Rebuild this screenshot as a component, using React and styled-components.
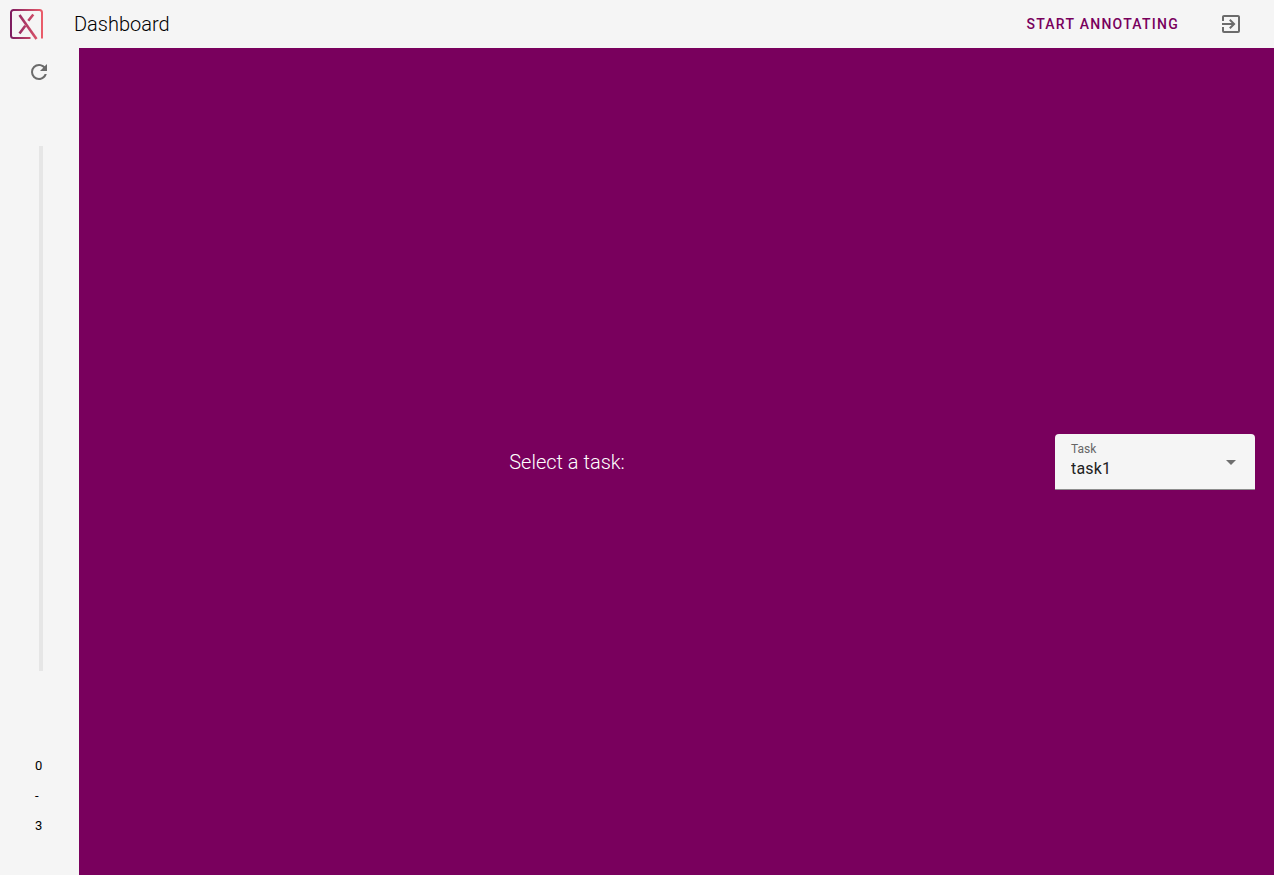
import React from "react";
import styled, { createGlobalStyle } from "styled-components";

const GlobalStyle = createGlobalStyle`
  *, *::before, *::after { box-sizing: border-box; }
  body {
    margin: 0;
    background: #f5f5f5;
    color: #000;
    font-family: Roboto, "Liberation Sans", sans-serif;
  }
`;

const Page = styled.div`
  min-height: 100vh;
  display: flex;
  flex-direction: column;
`;

const Header = styled.header`
  height: 48px;
  display: flex;
  align-items: center;
  padding: 0 19px 0 10px;
`;

const Logo = styled.svg`
  display: block;
  flex: none;
`;

const Title = styled.h1`
  margin: 0 auto 0 30px;
  font-size: 20px;
  font-weight: 300;
  line-height: 28px;
`;

const TextButton = styled.button`
  border: 0;
  background: none;
  padding: 0 8px;
  height: 36px;
  margin-right: 20px;
  color: #79005d;
  font-family: inherit;
  font-size: 14px;
  font-weight: 500;
  letter-spacing: 0.09em;
  text-transform: uppercase;
  cursor: pointer;
`;

const IconButton = styled.button`
  width: 48px;
  height: 48px;
  display: flex;
  align-items: center;
  justify-content: center;
  padding: 0;
  border: 0;
  background: none;
  color: #6b6b6b;
  cursor: pointer;
`;

const Body = styled.div`
  flex: 1;
  display: flex;
`;

const Sidebar = styled.aside`
  width: 79px;
  flex: none;
  display: flex;
  flex-direction: column;
  align-items: flex-start;
  padding-bottom: 34px;

  ${IconButton} {
    margin-left: 15px;
  }
`;

const ProgressTrack = styled.div`
  flex: 1;
  width: 4px;
  margin: 50px 0 80px 39px;
  background: #e6e6e6;
`;

const Counter = styled.div`
  margin-left: 35px;
  display: flex;
  flex-direction: column;
  font-size: 13px;
  line-height: 30px;
`;

const Main = styled.main`
  flex: 1;
  display: flex;
  align-items: center;
  padding-right: 19px;
  background: #79005d;
`;

const Prompt = styled.p`
  flex: 1;
  margin: 0;
  color: #fff;
  font-size: 20px;
  font-weight: 300;
  line-height: 28px;
  text-align: center;
`;

const Field = styled.div`
  position: relative;
  width: 200px;
  height: 56px;
  border-bottom: 1px solid #8c8c8c;
  border-radius: 4px 4px 0 0;
  background: #f5f5f5;
`;

const FieldLabel = styled.label`
  position: absolute;
  top: 7px;
  left: 16px;
  color: #666;
  font-size: 12px;
  line-height: 16px;
  pointer-events: none;
`;

const FieldSelect = styled.select`
  display: block;
  width: 100%;
  height: 100%;
  padding: 16px 48px 0 16px;
  appearance: none;
  border: 0;
  border-radius: 4px 4px 0 0;
  background: none;
  color: #212121;
  font-family: inherit;
  font-size: 16px;
  letter-spacing: 0.01em;
  line-height: 24px;
`;

const FieldArrow = styled.svg`
  position: absolute;
  top: 16px;
  right: 12px;
  color: #6f6f6f;
  pointer-events: none;
`;

function XLogo() {
  return (
    <Logo width="34" height="32" viewBox="0 0 34 32" fill="none" aria-hidden="true">
      <defs>
        <linearGradient id="brand" gradientUnits="userSpaceOnUse" x1="0" y1="0" x2="34" y2="0">
          <stop offset="0" stopColor="#7b1b60" />
          <stop offset="1" stopColor="#f0606a" />
        </linearGradient>
      </defs>
      <g stroke="url(#brand)">
        <path
          d="M20.5 30H3.5A2.5 2.5 0 0 1 1 27.5V4.5A2.5 2.5 0 0 1 3.5 2H29.500A2.5 2.5 0 0 1 32 4.5V30.500"
          strokeWidth="2"
        />
        <path d="M9.500 7L26.500 31" strokeWidth="2.600" />
        <path d="M23.300 6.500L18.300 12.800M15.300 17.800L9.500 25.500" strokeWidth="2.600" />
      </g>
    </Logo>
  );
}

function Icon({ d }) {
  return (
    <svg width="24" height="24" viewBox="0 0 24 24" fill="currentColor" aria-hidden="true">
      <path d={d} />
    </svg>
  );
}

const EXIT =
  "M19,3H5C3.89,3 3,3.89 3,5V9H5V5H19V19H5V15H3V19A2,2 0 0,0 5,21H19A2,2 0 0,0 21,19V5C21,3.89 20.1,3 19,3M10.08,15.58L11.5,17L16.5,12L11.5,7L10.08,8.41L12.67,11H3V13H12.67L10.08,15.58Z";
const REFRESH =
  "M17.65,6.35C16.2,4.9 14.21,4 12,4A8,8 0 0,0 4,12A8,8 0 0,0 12,20C15.73,20 18.84,17.45 19.73,14H17.65C16.83,16.33 14.61,18 12,18A6,6 0 0,1 6,12A6,6 0 0,1 12,6C13.66,6 15.14,6.69 16.22,7.78L13,11H20V4L17.65,6.35Z";

export default function App() {
  return (
    <Page>
      <GlobalStyle />
      <Header>
        <XLogo />
        <Title>Dashboard</Title>
        <TextButton type="button">Start annotating</TextButton>
        <IconButton type="button" aria-label="Log out">
          <Icon d={EXIT} />
        </IconButton>
      </Header>
      <Body>
        <Sidebar>
          <IconButton type="button" aria-label="Refresh">
            <Icon d={REFRESH} />
          </IconButton>
          <ProgressTrack
            role="progressbar"
            aria-label="Progress"
            aria-valuemin={0}
            aria-valuemax={3}
            aria-valuenow={0}
          />
          <Counter>
            <span>0</span>
            <span>-</span>
            <span>3</span>
          </Counter>
        </Sidebar>
        <Main>
          <Prompt>Select a task:</Prompt>
          <Field>
            <FieldLabel htmlFor="task">Task</FieldLabel>
            <FieldSelect id="task" defaultValue="task1">
              <option value="task1">task1</option>
            </FieldSelect>
            <FieldArrow width="24" height="24" viewBox="0 0 24 24" fill="currentColor" aria-hidden="true">
              <path d="M7 10l5 5 5-5z" />
            </FieldArrow>
          </Field>
        </Main>
      </Body>
    </Page>
  );
}
